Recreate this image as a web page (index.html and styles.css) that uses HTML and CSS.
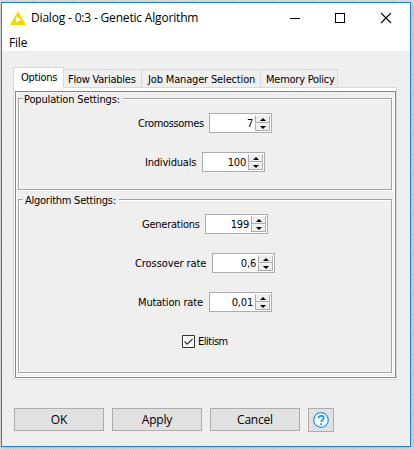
FILE: index.html
```
<!DOCTYPE html>
<html lang="en">
<head>
<meta charset="utf-8">
<title>Dialog - 0:3 - Genetic Algorithm</title>
<link rel="stylesheet" href="styles.css">
</head>
<body>
<main class="window">
  <header class="titlebar">
    <svg class="logo" width="16" height="14" viewBox="0 0 16 14"><path d="M8 0 16 14H0Z" fill="#ffd500"/><path d="M6 5.500v6l5.500-3Z" fill="#fff"/></svg>
    <span class="title">Dialog - 0:3 - Genetic Algorithm</span>
    <svg class="controls" width="104" height="12" viewBox="0 0 104 12" fill="none" stroke="#000"><path d="M1 6.500h10M46.500 1.500h9v9h-9z" shape-rendering="crispEdges"/><path d="m92 1 10 10m0-10L92 11" stroke-width="1.100"/></svg>
  </header>
  <nav class="menu"><span>File</span></nav>
  <section class="content">
    <div class="tabs">
      <div class="tab active">Options</div>
      <div class="tab flow">Flow Variables</div>
      <div class="tab job">Job Manager Selection</div>
      <div class="tab mem">Memory Policy</div>
    </div>
    <div class="pane"><div class="pane-inner">
      <section class="group population">
        <h2>Population Settings:</h2>
        <div class="row"><label class="l-cro">Cromossomes</label><div class="spinner"><span>7</span><div class="arrows"><i></i><i></i></div></div></div>
        <div class="row"><label class="l-ind">Individuals</label><div class="spinner"><span>100</span><div class="arrows"><i></i><i></i></div></div></div>
      </section>
      <section class="group algorithm">
        <h2>Algorithm Settings:</h2>
        <div class="row"><label class="l-gen">Generations</label><div class="spinner"><span>199</span><div class="arrows"><i></i><i></i></div></div></div>
        <div class="row"><label class="l-rate">Crossover rate</label><div class="spinner"><span>0,6</span><div class="arrows"><i></i><i></i></div></div></div>
        <div class="row"><label class="l-mut">Mutation rate</label><div class="spinner"><span>0,01</span><div class="arrows"><i></i><i></i></div></div></div>
        <div class="row check"><svg width="13" height="13" viewBox="0 0 13 13" fill="none"><path d="M.5.5h12v12H.5z" fill="#fff" stroke="#333"/><path d="m2.500 6.500 2.700 2.700L10.500 4" stroke="#333" stroke-width="1.200"/></svg><label class="l-eli">Elitism</label></div>
      </section>
    </div></div>
    <footer class="buttons">
      <div class="button">OK</div>
      <div class="button">Apply</div>
      <div class="button">Cancel</div>
      <div class="button help"><svg width="16" height="16" viewBox="0 0 16 16" fill="none" stroke="#1e9bf5"><circle cx="8" cy="8" r="7.300" fill="#fff" stroke-width="1.300"/><path d="M5.600 6.200C5.600 3 10.700 3 10.700 6 10.700 7.800 8.200 7.700 8.200 10" stroke-width="1.800"/><path d="M8.200 11.200v1.800" stroke-width="1.800"/></svg></div>
    </footer>
  </section>
</main>
</body>
</html>
```
FILE: styles.css
```
* { box-sizing: border-box; }
body {
  margin: 0;
  width: 414px;
  height: 450px;
  overflow: hidden;
  padding: 2px 0 0 1px;
  background: repeating-linear-gradient(90deg, transparent 0 13px, #cfd0d2 13px 14px, transparent 14px 20px),
    repeating-linear-gradient(transparent 0 14px, #cfd0d2 14px 15px, transparent 15px 20px), #dedede;
  color: #000;
  font-family: "DejaVu Sans Condensed", "DejaVu Sans", sans-serif;
  font-stretch: condensed;
  font-size: 11px;
  letter-spacing: -.16px;
  white-space: nowrap;
}
.window {
  width: 410px;
  height: 445px;
  border: 1px solid #1883d7;
  background: #efefef;
  box-shadow: 1px 1px 4px rgba(0, 0, 0, .2);
}
.titlebar {
  display: flex;
  align-items: center;
  height: 29px;
  padding: 0 17px 0 8px;
  background: #fff;
  font: 12px "Open Sans", sans-serif;
}
.logo { margin-right: 5px; }
.title { letter-spacing: -.18px; }
.controls { margin-left: auto; }
.menu {
  height: 19px;
  padding-left: 7px;
  background: #fff;
  font: 12px/21px "Open Sans", sans-serif;
  letter-spacing: -.2px;
}
.content { padding: 16px 14px 0 11px; }
.tabs { display: flex; align-items: flex-end; height: 20px; }
.tab {
  height: 18px;
  border: 1px solid #d9d9d9;
  border-width: 1px 1px 0 0;
  line-height: 19px;
}
.tab.active {
  position: relative;
  width: 51px;
  height: 21px;
  margin-bottom: -1px;
  border-left-width: 1px;
  background: #fff;
  padding-left: 7px;
  letter-spacing: -.3px;
}
.flow { width: 78px; padding-left: 4px; letter-spacing: -.23px; }
.job { width: 119px; padding-left: 6px; }
.mem { width: 77px; padding-left: 5px; letter-spacing: -.25px; }
.pane {
  width: 384px;
  height: 293px;
  padding: 3px 0 1px 1px;
  border: 1px solid #d9d9d9;
  background: #fff;
}
.pane-inner {
  width: 381px;
  height: 287px;
  border: 1px solid #828790;
  padding: 6px 3px 0 2px;
  background: #efefef;
  box-shadow: inset -1px -1px #fff, inset 1px 0 #fff;
}
.group {
  width: 374px;
  border: 1px solid #a5a5a5;
  box-shadow: 1px 1px #fff, inset 1px 1px #fff;
}
.population { height: 92px; }
.algorithm { height: 174px; margin-top: 9px; }
.group h2 {
  width: max-content;
  height: 14px;
  margin: -7px 0 0 4px;
  padding: 0 3px 0 1px;
  background: #efefef;
  font: inherit;
  line-height: 15px;
}
.algorithm h2 { letter-spacing: -.25px; padding-left: 2px; }
.row {
  display: flex;
  justify-content: center;
  align-items: center;
  gap: 6px;
  height: 20px;
  margin-bottom: 19px;
}
.population h2 + .row, .algorithm h2 + .row { margin-top: 7px; }
.l-cro { width: 65px; letter-spacing: -.35px; }
.l-ind { width: 51px; letter-spacing: -.2px; }
.l-gen { width: 57px; letter-spacing: -.25px; }
.l-rate { width: 71px; letter-spacing: -.08px; }
.l-mut { width: 65px; letter-spacing: -.16px; }
.l-eli { width: 30px; letter-spacing: -.5px; }
.spinner {
  display: flex;
  width: 63px;
  height: 20px;
  border: 1px solid #abadb3;
  background: #fff;
}
.spinner span { width: 44px; padding-right: 1px; text-align: right; line-height: 19px; letter-spacing: -.2px; }
.arrows { width: 17px; padding: 1px; }
.arrows i {
  display: flex;
  height: 8px;
  width: 15px;
  border: 1px solid #acacac;
  border-top-color: #f4f4f4;
  background: #eee;
  align-items: center;
  justify-content: center;
}
.arrows i::after { content: ""; border: 3px solid transparent; border-top: 0; border-bottom: 3px solid #000; }
.arrows i + i::after { border-bottom: 0; border-top: 3px solid #000; }
.check { gap: 3px; margin-top: 0; }
.buttons { display: flex; gap: 8px; margin: 28px 0 0 1px; }
.button {
  width: 90px;
  height: 23px;
  border: 1px solid #adadad;
  background: #e1e1e1;
  text-align: center;
  font: 12px/22px "Open Sans", sans-serif;
  letter-spacing: -.2px;
}
.help { display: flex; align-items: center; justify-content: center; width: 26px; height: 24px; }
```
